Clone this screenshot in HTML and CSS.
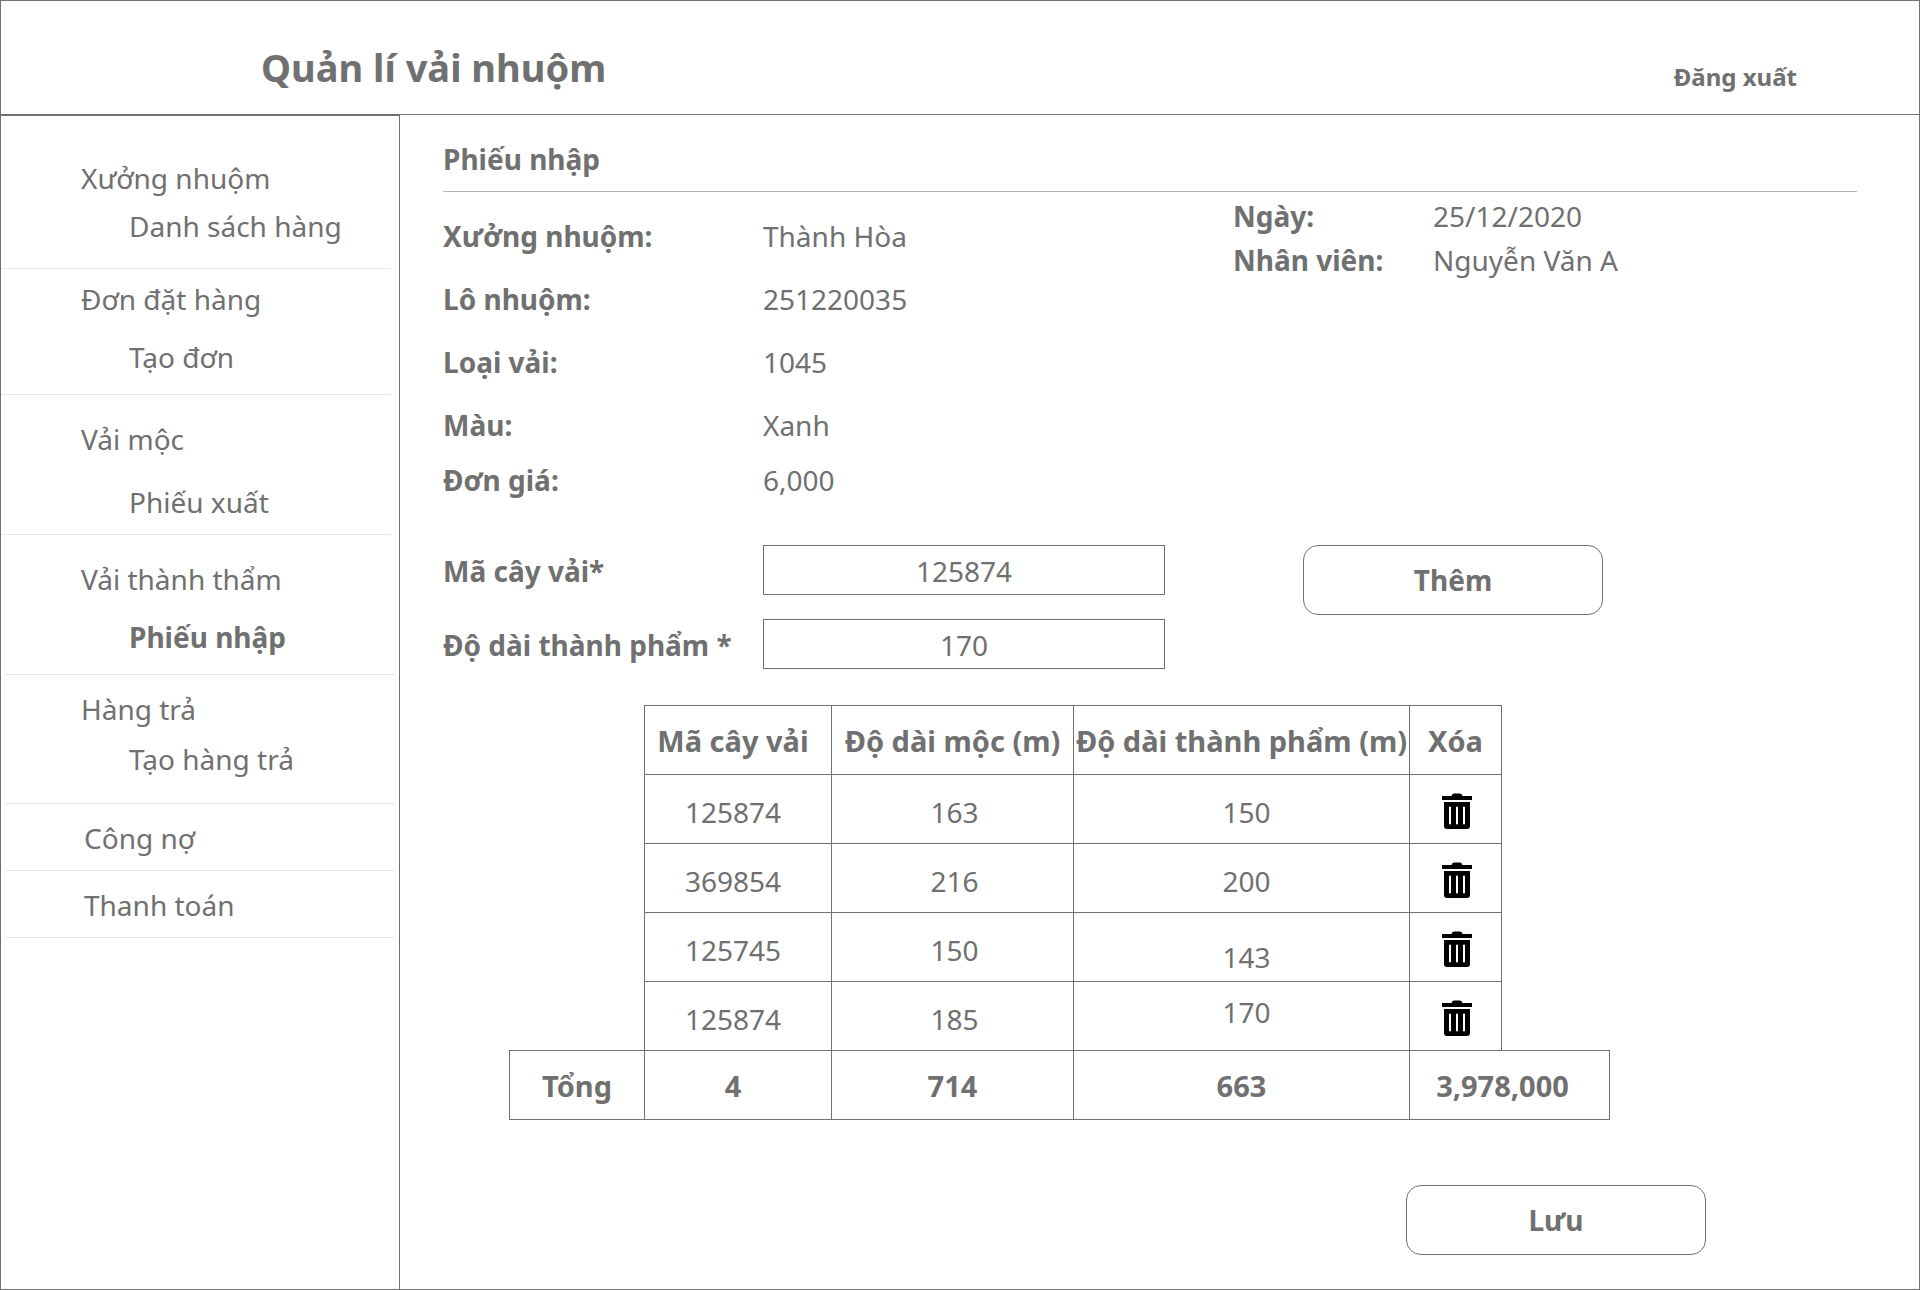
FILE: index.html
```html
<!DOCTYPE html>
<html lang="vi">
<head>
  <meta charset="utf-8">
  <meta name="viewport" content="width=device-width, initial-scale=1">
  <title>Quản lí vải nhuộm</title>
  <link rel="stylesheet" href="styles.css">
</head>
<body>
  <svg class="sprite" aria-hidden="true">
    <symbol id="trash" viewBox="0 0 30 36">
      <path d="M0 3h9.500q.5-2.500 2.500-2.500h6q2 0 2.500 2.500H30v4H0z"/>
      <path fill-rule="evenodd" d="M2 9h26v24q0 3-3 3H5q-3 0-3-3zM8 13.500q-1 0-1 1v16q0 1 1 1t1-1v-16q0-1-1-1zM15 13.500q-1 0-1 1v16q0 1 1 1t1-1v-16q0-1-1-1zM22 13.500q-1 0-1 1v16q0 1 1 1t1-1v-16q0-1-1-1z"/>
    </symbol>
  </svg>

  <header class="topbar">
    <h1 class="topbar-title">Quản lí vải nhuộm</h1>
    <a class="logout" href="#">Đăng xuất</a>
  </header>

  <div class="layout">
    <nav class="sidebar">
      <ul class="menu">
        <li class="group group-workshop">
          <a href="#">Xưởng nhuộm</a>
          <a class="sub" href="#">Danh sách hàng</a>
        </li>
        <li class="group group-order">
          <a href="#">Đơn đặt hàng</a>
          <a class="sub" href="#">Tạo đơn</a>
        </li>
        <li class="group group-raw">
          <a href="#">Vải mộc</a>
          <a class="sub" href="#">Phiếu xuất</a>
        </li>
        <li class="group group-finished inset">
          <a href="#">Vải thành thẩm</a>
          <a class="sub active" href="#" aria-current="page">Phiếu nhập</a>
        </li>
        <li class="group group-return inset">
          <a href="#">Hàng trả</a>
          <a class="sub" href="#">Tạo hàng trả</a>
        </li>
        <li class="group group-single inset"><a href="#">Công nợ</a></li>
        <li class="group group-single inset"><a href="#">Thanh toán</a></li>
      </ul>
    </nav>

    <main class="content">
      <h2 class="page-title">Phiếu nhập</h2>

      <section class="details">
        <div class="details-main">
          <dl class="facts">
            <dt>Xưởng nhuộm:</dt><dd>Thành Hòa</dd>
            <dt>Lô nhuộm:</dt><dd>251220035</dd>
            <dt>Loại vải:</dt><dd>1045</dd>
            <dt>Màu:</dt><dd>Xanh</dd>
          </dl>
          <dl class="facts facts-price">
            <dt>Đơn giá:</dt><dd>6,000</dd>
          </dl>
        </div>
        <dl class="facts facts-meta">
          <dt>Ngày:</dt><dd>25/12/2020</dd>
          <dt>Nhân viên:</dt><dd>Nguyễn Văn A</dd>
        </dl>
      </section>

      <form class="entry">
        <div class="entry-fields">
          <label for="code">Mã cây vải*</label>
          <input id="code" type="text" value="125874">
          <label for="length">Độ dài thành phẩm *</label>
          <input id="length" type="text" value="170">
        </div>
        <button class="button" type="button">Thêm</button>
      </form>

      <table class="rolls">
        <colgroup>
          <col class="col-total"><col class="col-code"><col class="col-raw"><col class="col-finished"><col class="col-delete"><col class="col-extra">
        </colgroup>
        <thead>
          <tr>
            <td class="blank"></td>
            <th class="code" scope="col">Mã cây vải</th>
            <th scope="col">Độ dài mộc (m)</th>
            <th scope="col">Độ dài thành phẩm (m)</th>
            <th scope="col">Xóa</th>
            <td class="blank"></td>
          </tr>
        </thead>
        <tbody>
          <tr>
            <td class="blank"></td>
            <td class="code">125874</td><td class="raw">163</td><td class="finished">150</td>
            <td class="tool"><button class="delete" type="button" aria-label="Xóa"><svg class="icon"><use href="#trash"/></svg></button></td>
            <td class="blank"></td>
          </tr>
          <tr>
            <td class="blank"></td>
            <td class="code">369854</td><td class="raw">216</td><td class="finished">200</td>
            <td class="tool"><button class="delete" type="button" aria-label="Xóa"><svg class="icon"><use href="#trash"/></svg></button></td>
            <td class="blank"></td>
          </tr>
          <tr>
            <td class="blank"></td>
            <td class="code">125745</td><td class="raw">150</td><td class="finished align-bottom">143</td>
            <td class="tool"><button class="delete" type="button" aria-label="Xóa"><svg class="icon"><use href="#trash"/></svg></button></td>
            <td class="blank"></td>
          </tr>
          <tr>
            <td class="blank"></td>
            <td class="code">125874</td><td class="raw">185</td><td class="finished align-top">170</td>
            <td class="tool"><button class="delete" type="button" aria-label="Xóa"><svg class="icon"><use href="#trash"/></svg></button></td>
            <td class="blank"></td>
          </tr>
        </tbody>
        <tfoot>
          <tr>
            <th scope="row">Tổng</th>
            <td class="code">4</td><td>714</td><td>663</td>
            <td class="amount" colspan="2">3,978,000</td>
          </tr>
        </tfoot>
      </table>

      <div class="actions">
        <button class="button" type="button">Lưu</button>
      </div>
    </main>
  </div>
</body>
</html>
```

FILE: styles.css
```css
:root {
  --ink: #707070;
  --rule: #b4b4b4;
  --divider: #e8e8e8;
}

* {
  box-sizing: border-box;
}

body {
  margin: 0;
  min-height: 100vh;
  display: flex;
  flex-direction: column;
  border: 1px solid var(--ink);
  background: #fff;
  color: var(--ink);
  font: 28px/38px "Noto Sans", "Open Sans", sans-serif;
}

a {
  color: inherit;
  text-decoration: none;
}

h1, h2, dl, dd, ul {
  margin: 0;
  padding: 0;
}

button, input {
  font: inherit;
  color: inherit;
}

.sprite {
  display: none;
}

/* Top bar */
.topbar {
  display: flex;
  justify-content: space-between;
  align-items: flex-end;
  padding: 39px 122px 20px 260px;
  border-bottom: 1px solid var(--ink);
}

.topbar-title {
  font-size: 38px;
  line-height: 54px;
}

.logout {
  font-size: 24px;
  line-height: 34px;
  font-weight: 700;
}

/* Page columns */
.layout {
  flex: 1;
  display: grid;
  grid-template-columns: 399px minmax(0, 1fr);
}

.sidebar {
  border-top: 1px solid var(--ink);
  border-right: 1px solid var(--ink);
}

/* Menu */
.menu {
  list-style: none;
}

.group {
  display: flex;
  flex-direction: column;
  margin-right: 8px;
  padding-left: 80px;
  border-bottom: 1px solid var(--divider);
}

.inset {
  margin: 0 4px;
  padding-left: 76px;
}

.sub {
  padding-left: 48px;
}

.active {
  font-weight: 700;
}

.group-workshop {
  gap: 10px;
  padding-top: 43px;
  padding-bottom: 23px;
}

.group-order {
  gap: 20px;
  padding-top: 11px;
  padding-bottom: 18px;
}

.group-raw {
  gap: 25px;
  padding-top: 25px;
  padding-bottom: 13px;
}

.group-finished {
  gap: 20px;
  padding-top: 25px;
  padding-bottom: 18px;
}

.group-return {
  gap: 12px;
  padding-top: 15px;
  padding-bottom: 25px;
}

.group-single {
  padding-top: 15px;
  padding-bottom: 13px;
  padding-left: 79px;
}

/* Content */
.content {
  padding: 25px 62px 34px 43px;
}

.page-title {
  padding-bottom: 13px;
  border-bottom: 1px solid var(--rule);
  font-size: 28px;
  line-height: 38px;
}

.details {
  display: grid;
  grid-template-columns: minmax(0, 1fr) 624px;
}

.details-main {
  padding-top: 25px;
}

.facts {
  display: grid;
  grid-template-columns: 320px 1fr;
  row-gap: 25px;
}

.facts dt {
  font-weight: 700;
}

.facts-price {
  padding-top: 17px;
}

.facts-meta {
  grid-template-columns: 200px 1fr;
  align-content: start;
  row-gap: 6px;
  padding-top: 5px;
}

.entry {
  display: flex;
  align-items: flex-start;
  gap: 138px;
  padding-top: 46px;
}

.entry-fields {
  display: grid;
  grid-template-columns: 320px 402px;
  align-items: center;
  row-gap: 24px;
}

.entry-fields label {
  padding-top: 2px;
  font-weight: 700;
}

.entry-fields input {
  width: 100%;
  height: 50px;
  padding: 2px 0 0;
  border: 1px solid var(--ink);
  background: none;
  text-align: center;
}

.button {
  width: 300px;
  height: 70px;
  padding: 0;
  border: 1px solid var(--ink);
  border-radius: 15px;
  background: #fff;
  font-weight: 700;
}

/* Roll table */
.rolls {
  table-layout: fixed;
  width: 1100px;
  margin: 36px 0 0 66px;
  border-collapse: collapse;
}

.col-total { width: 135px; }
.col-code { width: 187px; }
.col-raw { width: 242px; }
.col-finished { width: 336px; }
.col-delete { width: 92px; }
.col-extra { width: 108px; }

.rolls th,
.rolls td {
  height: 69px;
  padding: 11px 0 5px;
  border: 1px solid var(--ink);
  text-align: center;
  white-space: nowrap;
}

.rolls thead th,
.rolls tfoot th,
.rolls tfoot td {
  padding: 9px 0 7px;
  font-size: 29px;
  font-weight: 700;
}

.rolls td.blank {
  border: 0;
}

.rolls tr .code {
  padding-right: 10px;
}

.rolls .raw {
  padding-left: 4px;
}

.rolls .finished {
  padding-left: 10px;
}

.rolls tfoot .amount {
  padding-right: 14px;
}

.rolls .align-top {
  vertical-align: top;
}

.rolls .align-bottom {
  vertical-align: bottom;
}

.rolls .tool {
  padding: 3px 0 0 2px;
}

.delete {
  display: block;
  margin: 0 auto;
  padding: 0;
  border: 0;
  background: none;
}

.icon {
  display: block;
  width: 30px;
  height: 36px;
  fill: #000;
}

.actions {
  display: flex;
  justify-content: flex-end;
  padding: 65px 151px 0 0;
}
```
